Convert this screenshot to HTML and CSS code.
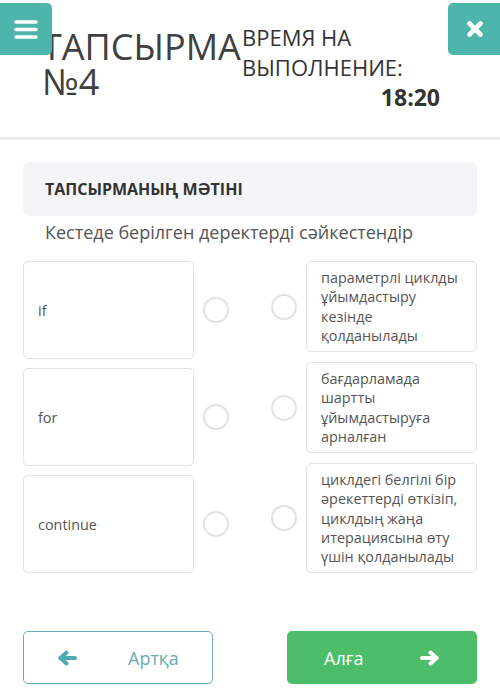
FILE: index.html
```html
<!DOCTYPE html>
<html lang="kk">
<head>
<meta charset="utf-8">
<title>Тапсырма №4</title>
<link rel="stylesheet" href="styles.css">
</head>
<body>
<header class="header">
  <div class="title">ТАПСЫРМА №4</div>
  <div class="timer">
    <div class="timer-label">ВРЕМЯ НА ВЫПОЛНЕНИЕ:</div>
    <div class="timer-value">18:20</div>
  </div>
  <button class="menu-btn" aria-label="menu">
    <svg width="24" height="20" viewBox="0 0 24 20"><g stroke="#fff" stroke-width="3.4" stroke-linecap="round"><line x1="2" y1="3" x2="22" y2="3"/><line x1="2" y1="10.5" x2="22" y2="10.5"/><line x1="2" y1="18" x2="22" y2="18"/></g></svg>
  </button>
  <button class="close-btn" aria-label="close">
    <svg width="18" height="18" viewBox="0 0 18 18"><g stroke="#fff" stroke-width="4.6" stroke-linecap="round"><line x1="3.5" y1="3.5" x2="14.5" y2="14.5"/><line x1="14.5" y1="3.5" x2="3.5" y2="14.5"/></g></svg>
  </button>
</header>

<main class="main">
  <div class="task-head">ТАПСЫРМАНЫҢ МӘТІНІ</div>
  <p class="instruction">Кестеде берілген деректерді сәйкестендір</p>

  <div class="match">
    <div class="col col-left">
      <div class="item">
        <div class="card card-left">if</div>
        <span class="radio"></span>
      </div>
      <div class="item">
        <div class="card card-left">for</div>
        <span class="radio"></span>
      </div>
      <div class="item">
        <div class="card card-left">continue</div>
        <span class="radio"></span>
      </div>
    </div>
    <div class="col col-right">
      <div class="item">
        <span class="radio"></span>
        <div class="card card-right">параметрлі циклды ұйымдастыру кезінде қолданылады</div>
      </div>
      <div class="item">
        <span class="radio"></span>
        <div class="card card-right">бағдарламада шартты ұйымдастыруға арналған</div>
      </div>
      <div class="item">
        <span class="radio"></span>
        <div class="card card-right">циклдегі белгілі бір әрекеттерді өткізіп, циклдың жаңа итерациясына өту үшін қолданылады</div>
      </div>
    </div>
  </div>

  <div class="nav">
    <button class="nav-btn back">
      <svg class="arrow" width="20" height="16" viewBox="0 0 20 16"><g fill="none" stroke="#4eabb2" stroke-width="4" stroke-linecap="round" stroke-linejoin="round"><line x1="3.5" y1="8" x2="18" y2="8"/><polyline points="9.5,2.5 3.5,8 9.5,13.5"/></g></svg>
      <span>Артқа</span>
    </button>
    <button class="nav-btn next">
      <span>Алға</span>
      <svg class="arrow" width="20" height="16" viewBox="0 0 20 16"><g fill="none" stroke="#fff" stroke-width="4" stroke-linecap="round" stroke-linejoin="round"><line x1="2" y1="8" x2="16.5" y2="8"/><polyline points="10.5,2.5 16.5,8 10.5,13.5"/></g></svg>
    </button>
  </div>
</main>
</body>
</html>
```

FILE: styles.css
```css
* { box-sizing: border-box; }

html, body {
  margin: 0;
  padding: 0;
  background: #fff;
}

body {
  font-family: "Open Sans", "Noto Sans", sans-serif;
  color: #555;
  width: 500px;
}

button {
  font-family: inherit;
  border: none;
  padding: 0;
  cursor: pointer;
}

.header {
  position: relative;
  height: 140px;
  border-bottom: 3px solid #ececec;
  display: flex;
  padding-left: 42px;
}

.title {
  flex: 0 0 200px;
  min-width: 0;
  font-size: 36px;
  line-height: 35px;
  color: #404040;
  padding-top: 29px;
}

.timer {
  flex: 0 0 198px;
  padding-top: 22px;
  font-size: 22px;
  line-height: 30px;
  color: #333;
}

.timer-value {
  text-align: right;
  font-weight: 700;
  font-size: 23px;
}

.menu-btn,
.close-btn {
  position: absolute;
  top: 3px;
  width: 52px;
  height: 52px;
  background: #4eb5ad;
  display: flex;
  align-items: center;
  justify-content: center;
}

.menu-btn {
  left: 0;
  border-radius: 0 5px 5px 0;
}

.close-btn {
  right: 0;
  border-radius: 5px 0 0 5px;
  padding-left: 1px;
}

.main {
  padding: 22px 23px 0;
}

.task-head {
  height: 54px;
  background: #f4f5f7;
  border-radius: 6px;
  padding-left: 22px;
  display: flex;
  align-items: center;
  font-size: 16px;
  font-weight: 700;
  color: #333;
}

.instruction {
  margin: 4px 0 0;
  padding-left: 22px;
  font-size: 18px;
  line-height: 24px;
  color: #555;
}

.match {
  margin-top: 17px;
  display: grid;
  grid-template-columns: 206px 206px;
  column-gap: 42px;
  align-items: start;
}

.col {
  display: flex;
  flex-direction: column;
}

.col-left { gap: 9px; }
.col-right { gap: 10px; }

.item {
  display: flex;
  align-items: center;
  gap: 9px;
}

.card {
  flex: 0 0 171px;
  width: 171px;
  border: 1px solid #e3e3e3;
  border-radius: 5px;
  font-size: 14.4px;
  color: #555;
  background: #fff;
}

.card-left {
  height: 98px;
  padding: 0 14px;
  display: flex;
  align-items: center;
}

.card-right {
  padding: 6px 11px 6px 14px;
  line-height: 19.25px;
}

.radio {
  flex: 0 0 26px;
  width: 26px;
  height: 26px;
  border: 2.5px solid #e2e2e2;
  border-radius: 50%;
}

.nav {
  margin-top: 58px;
  display: flex;
  justify-content: space-between;
}

.nav-btn {
  width: 190px;
  height: 53px;
  border-radius: 5px;
  display: flex;
  align-items: center;
  font-size: 18px;
}

.back {
  background: #fff;
  border: 1.5px solid #6aadb4;
  color: #67abb1;
  padding-left: 33px;
  gap: 51px;
}

.next {
  background: #4cbe69;
  color: #fff;
  padding-left: 37px;
  gap: 57px;
}

.arrow { display: block; }
```
